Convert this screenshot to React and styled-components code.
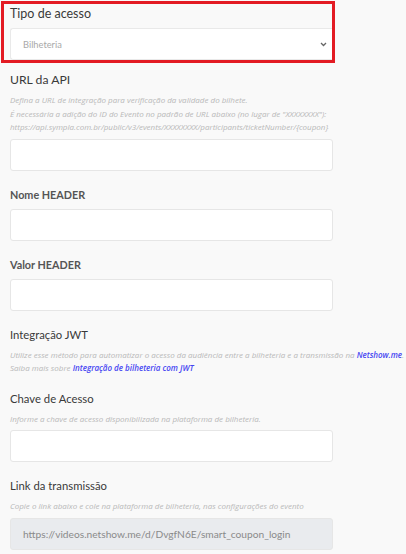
import React from 'react'
import styled, { createGlobalStyle } from 'styled-components'

const GlobalStyle = createGlobalStyle`
  body {
    margin: 0;
    background: #f9f9f9;
    font-family: 'Lato', 'Liberation Sans', sans-serif;
  }
`

const Page = styled.div`
  width: 406px;
  height: 554px;
  overflow: hidden;
  padding: 1px 0 0 10px;
  box-sizing: border-box;
  background: #f9f9f9;
`

const Highlight = styled.div`
  width: 334px;
  box-sizing: border-box;
  margin-left: -9px;
  margin-bottom: 9px;
  border: 3px solid #e31b23;
  padding: 2px 0 0 6px;
`

const Field = styled.div`
  margin-bottom: 16px;
`

const Label = styled.div`
  font-size: ${p => p.$size || '11.3px'};
  font-weight: ${p => (p.$bold ? 700 : 400)};
  color: ${p => (p.$bold ? '#555' : '#3a3a3a')};
  line-height: 16px;
  margin-bottom: ${p => (p.$tight ? '5px' : '6px')};
  white-space: nowrap;
`

const Desc = styled.p`
  margin: 0 0 5px;
  font-family: 'Open Sans', 'Lato', sans-serif;
  font-size: 8px;
  font-style: italic;
  line-height: 13.5px;
  color: #b8b8b8;
  white-space: nowrap;
`

const Link = styled.a`
  color: #4646f2;
  font-weight: 600;
  text-decoration: none;
`

const Input = styled.input`
  display: block;
  width: 323px;
  height: 32px;
  box-sizing: border-box;
  border: 1px solid #e6e6e6;
  border-radius: 3px;
  background: ${p => (p.disabled ? '#e9ebee' : '#fff')};
  padding: 0 12px;
  font-family: 'Lato', 'Liberation Sans', sans-serif;
  font-size: 10.2px;
  color: #8a8a8a;
  outline: none;
`

const SelectWrap = styled.div`
  position: relative;
  width: 322px;
  height: 32px;
`

const Select = styled.select`
  appearance: none;
  width: 100%;
  height: 100%;
  box-sizing: border-box;
  border: 1px solid #e9e9e9;
  border-right: none;
  border-radius: 3px 0 0 3px;
  background: #fff;
  padding: 0 12px;
  font-family: 'Lato', 'Liberation Sans', sans-serif;
  font-size: 9.3px;
  color: #a9a9a9;
  outline: none;
`

const Chevron = styled.svg`
  position: absolute;
  right: 5px;
  top: 14px;
  pointer-events: none;
`

export default function App() {
  return (
    <>
      <GlobalStyle />
      <Page>
        <Highlight>
          <Label $size="12.5px">Tipo de acesso</Label>
          <SelectWrap>
            <Select defaultValue="bilheteria">
              <option value="bilheteria">Bilheteria</option>
            </Select>
            <Chevron width="7" height="5" viewBox="0 0 7 5">
              <path d="M1 1 L3.5 3.5 L6 1" fill="none" stroke="#666" strokeWidth="1.3" />
            </Chevron>
          </SelectWrap>
        </Highlight>

        <Field>
          <Label $size="12.2px" $tight>URL da API</Label>
          <Desc>
            Defina a URL de integração para verificação da validade do bilhete.
            <br />
            É necessária a adição do ID do Evento no padrão de URL abaixo (no lugar de "XXXXXXXX"):
            <br />
            https://api.sympla.com.br/public/v3/events/XXXXXXXX/participants/ticketNumber/{'{coupon}'}
          </Desc>
          <Input />
        </Field>

        <Field>
          <Label $size="10.8px" $bold>Nome HEADER</Label>
          <Input />
        </Field>

        <Field>
          <Label $size="10.8px" $bold>Valor HEADER</Label>
          <Input />
        </Field>

        <Field>
          <Label $tight>Integração JWT</Label>
          <Desc>
            Utilize esse método para automatizar o acesso da audiência entre a bilheteria e a transmissão na{' '}
            <Link href="#">Netshow.me</Link>.
            <br />
            Saiba mais sobre <Link href="#">Integração de bilheteria com JWT</Link>
          </Desc>
        </Field>

        <Field>
          <Label $tight>Chave de Acesso</Label>
          <Desc>Informe a chave de acesso disponibilizada na plataforma de bilheteria.</Desc>
          <Input />
        </Field>

        <Field>
          <Label $tight>Link da transmissão</Label>
          <Desc>Copie o link abaixo e cole na plataforma de bilheteria, nas configurações do evento</Desc>
          <Input disabled value="https://videos.netshow.me/d/DvgfN6E/smart_coupon_login" readOnly />
        </Field>
      </Page>
    </>
  )
}
